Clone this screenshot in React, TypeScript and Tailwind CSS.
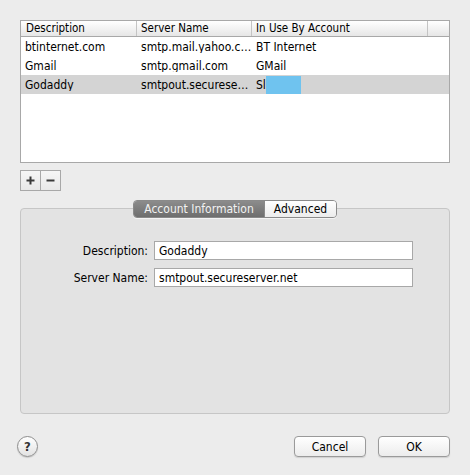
import { useState } from "react";

const font = '"DejaVu Sans Condensed", "DejaVu Sans", "Liberation Sans", sans-serif';

const rows = [
  { desc: "btinternet.com", server: "smtp.mail.yahoo.c…", account: "BT Internet" },
  { desc: "Gmail", server: "smtp.gmail.com", account: "GMail" },
  { desc: "Godaddy", server: "smtpout.securese…", account: "Sl", redacted: true },
];

export default function App() {
  const [selected, setSelected] = useState(2);
  const [tab, setTab] = useState<"info" | "advanced">("info");

  return (
    <div
      className="w-[470px] h-[475px] bg-[#ececec] text-[12px] text-black overflow-hidden"
      style={{ fontFamily: font }}
    >
      <div className="pt-[20px] px-[20px]">
        {/* table */}
        <div className="h-[143px] border border-[#a8a8a8] bg-white flex flex-col">
          <div className="h-[16px] flex items-stretch text-[11.5px] bg-gradient-to-b from-white to-[#e6e6e6] border-b border-[#a8a8a8] leading-none">
            <div className="w-[116px] flex items-center pl-[5px] border-r border-[#c4c4c4]">Description</div>
            <div className="w-[115px] flex items-center pl-[4px] border-r border-[#c4c4c4]">Server Name</div>
            <div className="w-[176px] flex items-center pl-[4px] border-r border-[#c4c4c4]">In Use By Account</div>
            <div className="flex-1" />
          </div>
          <div className="flex flex-col">
            {rows.map((r, i) => (
              <div
                key={r.desc}
                onClick={() => setSelected(i)}
                className={`h-[19px] flex items-center leading-none ${selected === i ? "bg-[#d4d4d4]" : ""}`}
              >
                <div className="w-[116px] pl-[4px] whitespace-nowrap overflow-hidden">{r.desc}</div>
                <div className="w-[115px] pl-[4px] whitespace-nowrap overflow-hidden">{r.server}</div>
                <div className="w-[176px] pl-[4px] flex items-center">
                  <span>{r.account}</span>
                  {r.redacted && <span className="w-[35px] h-[18px] bg-[#6fc3ef]" />}
                </div>
              </div>
            ))}
          </div>
        </div>

        {/* add / remove */}
        <div className="mt-[7px] flex w-[41px] h-[21px] border border-[#a8a8a8] bg-gradient-to-b from-[#f6f6f6] to-[#e8e8e8]">
          <button className="w-[20px] flex items-center justify-center border-r border-[#a8a8a8]">
            <svg width="9" height="9" viewBox="0 0 9 9">
              <path d="M4.5 0.5v8M0.5 4.5h8" stroke="#3a3a3a" strokeWidth="2" />
            </svg>
          </button>
          <button className="flex-1 flex items-center justify-center">
            <svg width="9" height="9" viewBox="0 0 9 9">
              <path d="M0.5 4.5h8" stroke="#3a3a3a" strokeWidth="2" />
            </svg>
          </button>
        </div>

        {/* tab view */}
        <div className="mt-[9px] relative">
          <div className="relative z-10 flex justify-center">
            <div className="flex h-[18px] rounded-[4px] border border-[#8a8a8a] overflow-hidden text-[12px] leading-none shadow-[0_1px_0_rgba(255,255,255,0.6)]">
              <button
                onClick={() => setTab("info")}
                className={`w-[130px] flex items-center justify-center ${
                  tab === "info"
                    ? "bg-gradient-to-b from-[#8c8c8c] to-[#6e6e6e] text-[#f2f2f2]"
                    : "bg-gradient-to-b from-white to-[#ececec]"
                }`}
              >
                Account Information
              </button>
              <button
                onClick={() => setTab("advanced")}
                className={`w-[72px] flex items-center justify-center border-l border-[#8a8a8a] ${
                  tab === "advanced"
                    ? "bg-gradient-to-b from-[#8c8c8c] to-[#6e6e6e] text-[#f2f2f2]"
                    : "bg-gradient-to-b from-white to-[#ececec]"
                }`}
              >
                Advanced
              </button>
            </div>
          </div>
          <div className="-mt-[10px] h-[206px] rounded-[4px] border border-[#c6c6c6] bg-[#e3e3e3] pt-[32px]">
            <div className="flex items-center h-[19px]">
              <label className="w-[133px] text-right pr-[6px] whitespace-nowrap">Description:</label>
              <input
                defaultValue="Godaddy"
                className="w-[259px] h-[19px] bg-white border border-[#a8a8a8] px-[4px] outline-none text-[12px]"
                style={{ fontFamily: font }}
              />
            </div>
            <div className="flex items-center h-[19px] mt-[8px]">
              <label className="w-[133px] text-right pr-[6px] whitespace-nowrap">Server Name:</label>
              <input
                defaultValue="smtpout.secureserver.net"
                className="w-[259px] h-[19px] bg-white border border-[#a8a8a8] px-[4px] outline-none text-[12px]"
                style={{ fontFamily: font }}
              />
            </div>
          </div>
        </div>
      </div>

      {/* footer */}
      <div className="mt-[22px] pl-[17px] pr-[20px] flex items-center">
        <button className="w-[21px] h-[21px] rounded-full border border-[#8e8e8e] bg-gradient-to-b from-white to-[#e2e2e2] flex items-center justify-center text-[13px] font-bold text-[#333] leading-none shadow-[0_1px_1px_rgba(0,0,0,0.15)]">
          ?
        </button>
        <div className="flex-1" />
        <button className="w-[72px] h-[21px] rounded-[4px] border border-[#9a9a9a] bg-gradient-to-b from-white to-[#ececec] text-[12px] leading-none shadow-[0_1px_1px_rgba(0,0,0,0.12)]">
          Cancel
        </button>
        <button className="ml-[12px] w-[72px] h-[21px] rounded-[4px] border border-[#9a9a9a] bg-gradient-to-b from-white to-[#ececec] text-[12px] leading-none shadow-[0_1px_1px_rgba(0,0,0,0.12)]">
          OK
        </button>
      </div>
    </div>
  );
}
